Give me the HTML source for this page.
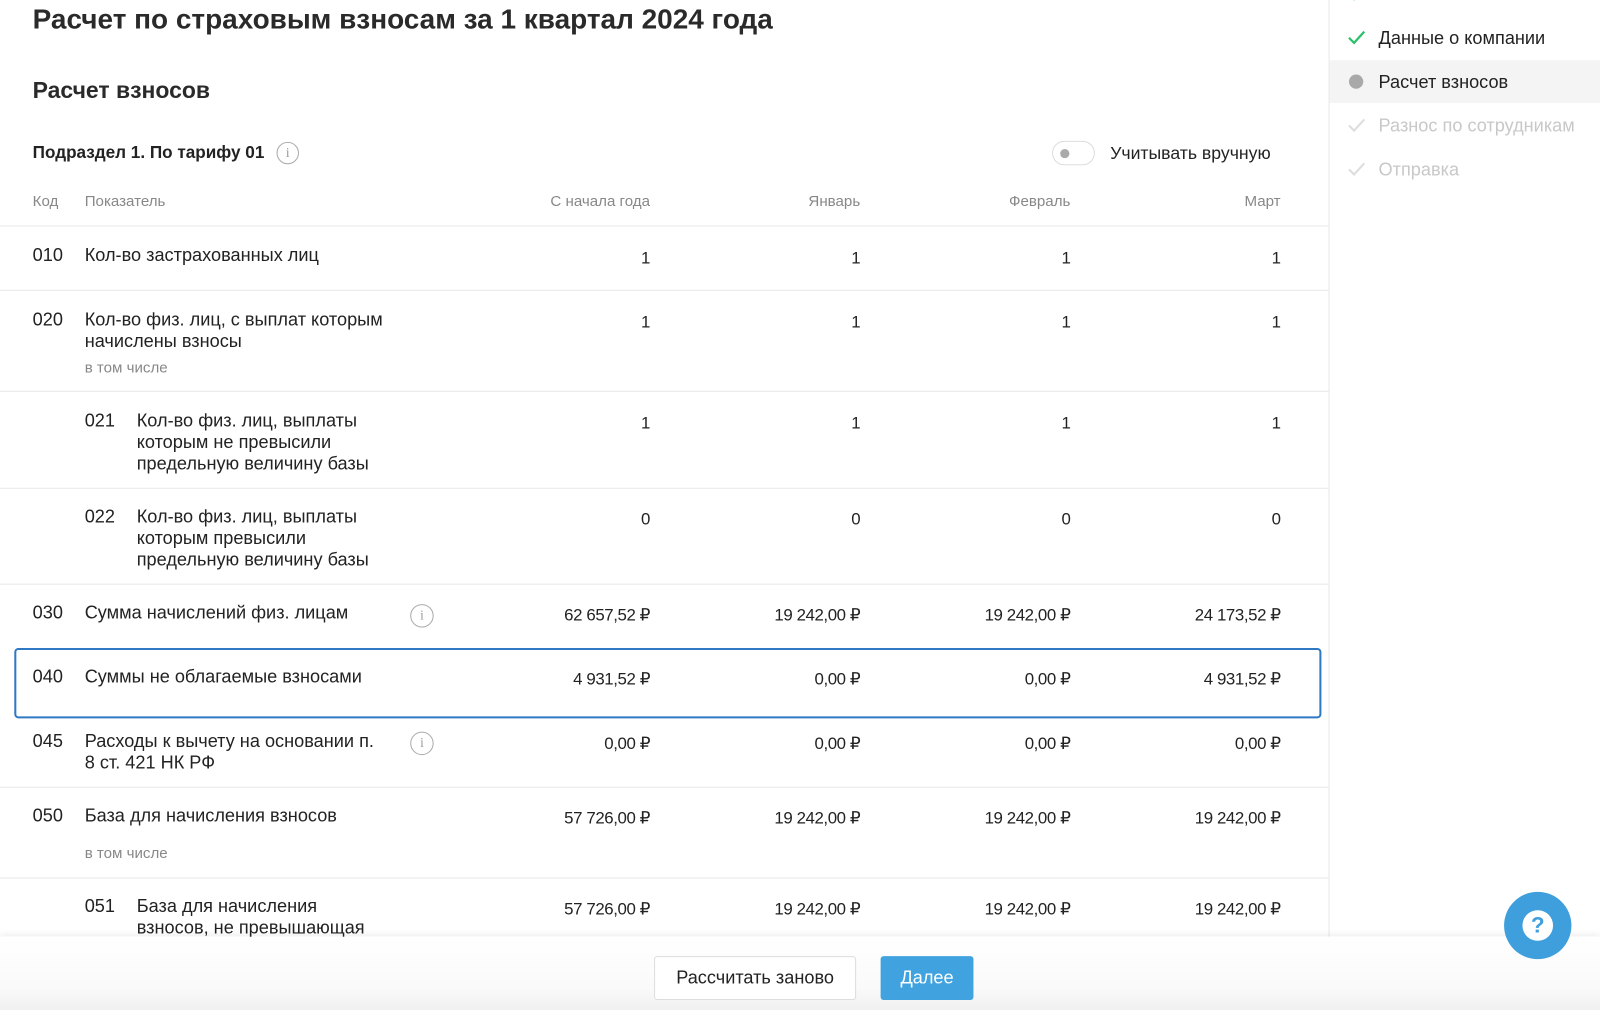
<!DOCTYPE html>
<html><head><meta charset="utf-8"><style>
html,body{margin:0;padding:0;width:1600px;height:1010px;overflow:hidden;background:#fff}
#w{position:absolute;left:0;top:0;width:1568px;height:990px;transform:scale(1.0204);transform-origin:0 0;font-family:"Liberation Sans","Noto Sans CJK SC",sans-serif;color:#222}
.a{position:absolute;white-space:nowrap}
.t{font-size:17.8px;line-height:21px}
.n{font-size:16.5px;line-height:21px;letter-spacing:-0.4px}
.r{text-align:right;width:200px}
.g{color:#888;font-size:14.8px}
.hl{position:absolute;left:0;width:1302px;height:1px;background:#e8e8e8}
.info{position:absolute;width:20px;height:20px;border:1.6px solid #aaa;border-radius:50%;box-sizing:border-box;color:#999;font-size:13px;text-align:center;line-height:17px;font-family:"Liberation Serif",serif}
</style></head><body><div id="w">
<div class="a" style="left:32px;top:3px;font-size:27.4px;font-weight:bold;color:#2a2a2a">Расчет по страховым взносам за 1 квартал 2024 года</div>
<div class="a" style="left:32px;top:76px;font-size:22.5px;font-weight:bold;color:#2a2a2a">Расчет взносов</div>
<div class="a" style="left:32px;top:140px;font-size:16.8px;font-weight:bold">Подраздел 1. По тарифу 01</div>
<div class="info" style="left:271px;top:139px;width:22px;height:22px;line-height:19px">i</div>
<div class="a" style="left:1031px;top:138px;width:42px;height:24px;border:1px solid #ddd;border-radius:12px;box-sizing:border-box"></div>
<div class="a" style="left:1039px;top:146px;width:9px;height:9px;border-radius:50%;background:#aaa"></div>
<div class="a" style="left:1088px;top:140px;font-size:17.3px;line-height:21px">Учитывать вручную</div>

<div class="a g" style="left:32px;top:190px">Код</div>
<div class="a g" style="left:83px;top:190px">Показатель</div>
<div class="a g r" style="left:437px;top:190px">С начала года</div>
<div class="a g r" style="left:643px;top:190px">Январь</div>
<div class="a g r" style="left:849px;top:190px">Февраль</div>
<div class="a g r" style="left:1055px;top:190px">Март</div>
<div class="hl" style="top:221px"></div>

<div class="a t" style="left:32px;top:240px">010</div>
<div class="a t" style="left:83px;top:240px">Кол-во застрахованных лиц</div>
<div class="a n r" style="left:437px;top:243px">1</div><div class="a n r" style="left:643px;top:243px">1</div><div class="a n r" style="left:849px;top:243px">1</div><div class="a n r" style="left:1055px;top:243px">1</div>
<div class="hl" style="top:284px"></div>

<div class="a t" style="left:32px;top:303px">020</div>
<div class="a t" style="left:83px;top:303px">Кол-во физ. лиц, с выплат которым<br>начислены взносы</div>
<div class="a g" style="left:83px;top:353px">в том числе</div>
<div class="a n r" style="left:437px;top:306px">1</div><div class="a n r" style="left:643px;top:306px">1</div><div class="a n r" style="left:849px;top:306px">1</div><div class="a n r" style="left:1055px;top:306px">1</div>
<div class="hl" style="top:383px"></div>

<div class="a t" style="left:83px;top:402px">021</div>
<div class="a t" style="left:134px;top:402px">Кол-во физ. лиц, выплаты<br>которым не превысили<br>предельную величину базы</div>
<div class="a n r" style="left:437px;top:405px">1</div><div class="a n r" style="left:643px;top:405px">1</div><div class="a n r" style="left:849px;top:405px">1</div><div class="a n r" style="left:1055px;top:405px">1</div>
<div class="hl" style="top:478px"></div>

<div class="a t" style="left:83px;top:496px">022</div>
<div class="a t" style="left:134px;top:496px">Кол-во физ. лиц, выплаты<br>которым превысили<br>предельную величину базы</div>
<div class="a n r" style="left:437px;top:499px">0</div><div class="a n r" style="left:643px;top:499px">0</div><div class="a n r" style="left:849px;top:499px">0</div><div class="a n r" style="left:1055px;top:499px">0</div>
<div class="hl" style="top:572px"></div>

<div class="a t" style="left:32px;top:590px">030</div>
<div class="a t" style="left:83px;top:590px">Сумма начислений физ. лицам</div>
<div class="info" style="left:402px;top:592px;width:23px;height:23px;line-height:20px">i</div>
<div class="a n r" style="left:437px;top:593px">62 657,52 ₽</div><div class="a n r" style="left:643px;top:593px">19 242,00 ₽</div><div class="a n r" style="left:849px;top:593px">19 242,00 ₽</div><div class="a n r" style="left:1055px;top:593px">24 173,52 ₽</div>

<div class="a" style="left:14px;top:635px;width:1281px;height:69px;border:2.5px solid #2f78c4;border-radius:4px;box-sizing:border-box"></div>
<div class="a t" style="left:32px;top:653px">040</div>
<div class="a t" style="left:83px;top:653px">Суммы не облагаемые взносами</div>
<div class="a n r" style="left:437px;top:656px">4 931,52 ₽</div><div class="a n r" style="left:643px;top:656px">0,00 ₽</div><div class="a n r" style="left:849px;top:656px">0,00 ₽</div><div class="a n r" style="left:1055px;top:656px">4 931,52 ₽</div>

<div class="a t" style="left:32px;top:716px">045</div>
<div class="a t" style="left:83px;top:716px">Расходы к вычету на основании п.<br>8 ст. 421 НК РФ</div>
<div class="info" style="left:402px;top:717px;width:23px;height:23px;line-height:20px">i</div>
<div class="a n r" style="left:437px;top:719px">0,00 ₽</div><div class="a n r" style="left:643px;top:719px">0,00 ₽</div><div class="a n r" style="left:849px;top:719px">0,00 ₽</div><div class="a n r" style="left:1055px;top:719px">0,00 ₽</div>
<div class="hl" style="top:771px"></div>

<div class="a t" style="left:32px;top:789px">050</div>
<div class="a t" style="left:83px;top:789px">База для начисления взносов</div>
<div class="a g" style="left:83px;top:829px">в том числе</div>
<div class="a n r" style="left:437px;top:792px">57 726,00 ₽</div><div class="a n r" style="left:643px;top:792px">19 242,00 ₽</div><div class="a n r" style="left:849px;top:792px">19 242,00 ₽</div><div class="a n r" style="left:1055px;top:792px">19 242,00 ₽</div>
<div class="hl" style="top:860px"></div>

<div class="a t" style="left:83px;top:878px">051</div>
<div class="a t" style="left:134px;top:878px">База для начисления<br>взносов, не превышающая</div>
<div class="a n r" style="left:437px;top:881px">57 726,00 ₽</div><div class="a n r" style="left:643px;top:881px">19 242,00 ₽</div><div class="a n r" style="left:849px;top:881px">19 242,00 ₽</div><div class="a n r" style="left:1055px;top:881px">19 242,00 ₽</div>

<div class="a" style="left:1302px;top:0;width:1px;height:918px;background:#e8e8e8"></div>
<div class="a t" style="left:1351px;top:-16px;color:#222">Ознакомление</div>
<svg class="a" style="left:1320px;top:-14px" width="20" height="16"><path d="M2 8l5 5 10-11" stroke="#2cbf6a" stroke-width="2.2" fill="none"/></svg>
<svg class="a" style="left:1320px;top:29px" width="20" height="16"><path d="M2 8l5 5 10-11" stroke="#2cbf6a" stroke-width="2.2" fill="none"/></svg>
<div class="a t" style="left:1351px;top:27px">Данные о компании</div>
<div class="a" style="left:1303px;top:59px;width:265px;height:42px;background:#f4f4f4"></div>
<div class="a" style="left:1322px;top:73px;width:14px;height:14px;border-radius:50%;background:#a9a9a9"></div>
<div class="a t" style="left:1351px;top:70px">Расчет взносов</div>
<svg class="a" style="left:1320px;top:115px" width="20" height="16"><path d="M2 8l5 5 10-11" stroke="#ddd" stroke-width="2" fill="none"/></svg>
<div class="a t" style="left:1351px;top:113px;color:#c8c8c8">Разнос по сотрудникам</div>
<svg class="a" style="left:1320px;top:158px" width="20" height="16"><path d="M2 8l5 5 10-11" stroke="#ddd" stroke-width="2" fill="none"/></svg>
<div class="a t" style="left:1351px;top:156px;color:#c8c8c8">Отправка</div>

<div class="a" style="left:0;top:918px;width:1568px;height:72px;background:linear-gradient(#fff,#fafafa 70%,#f0f0f0);box-shadow:0 -3px 6px rgba(0,0,0,0.06)"></div>
<div class="a t" style="left:641px;top:937px;width:198px;height:43px;border:1px solid #ddd;border-radius:3px;box-sizing:border-box;text-align:center;line-height:41px;background:#fff">Рассчитать заново</div>
<div class="a t" style="left:863px;top:937px;width:91px;height:43px;border-radius:3px;background:#40a3df;color:#fff;text-align:center;line-height:43px">Далее</div>
<div class="a" style="left:1474px;top:874px;width:66px;height:66px;border-radius:50%;background:#3f9fdc"></div>
<div class="a" style="left:1492px;top:892px;width:30px;height:30px;border-radius:50%;background:#fff;color:#3f9fdc;font-weight:bold;font-size:22px;text-align:center;line-height:30px">?</div>
</div></body></html>
